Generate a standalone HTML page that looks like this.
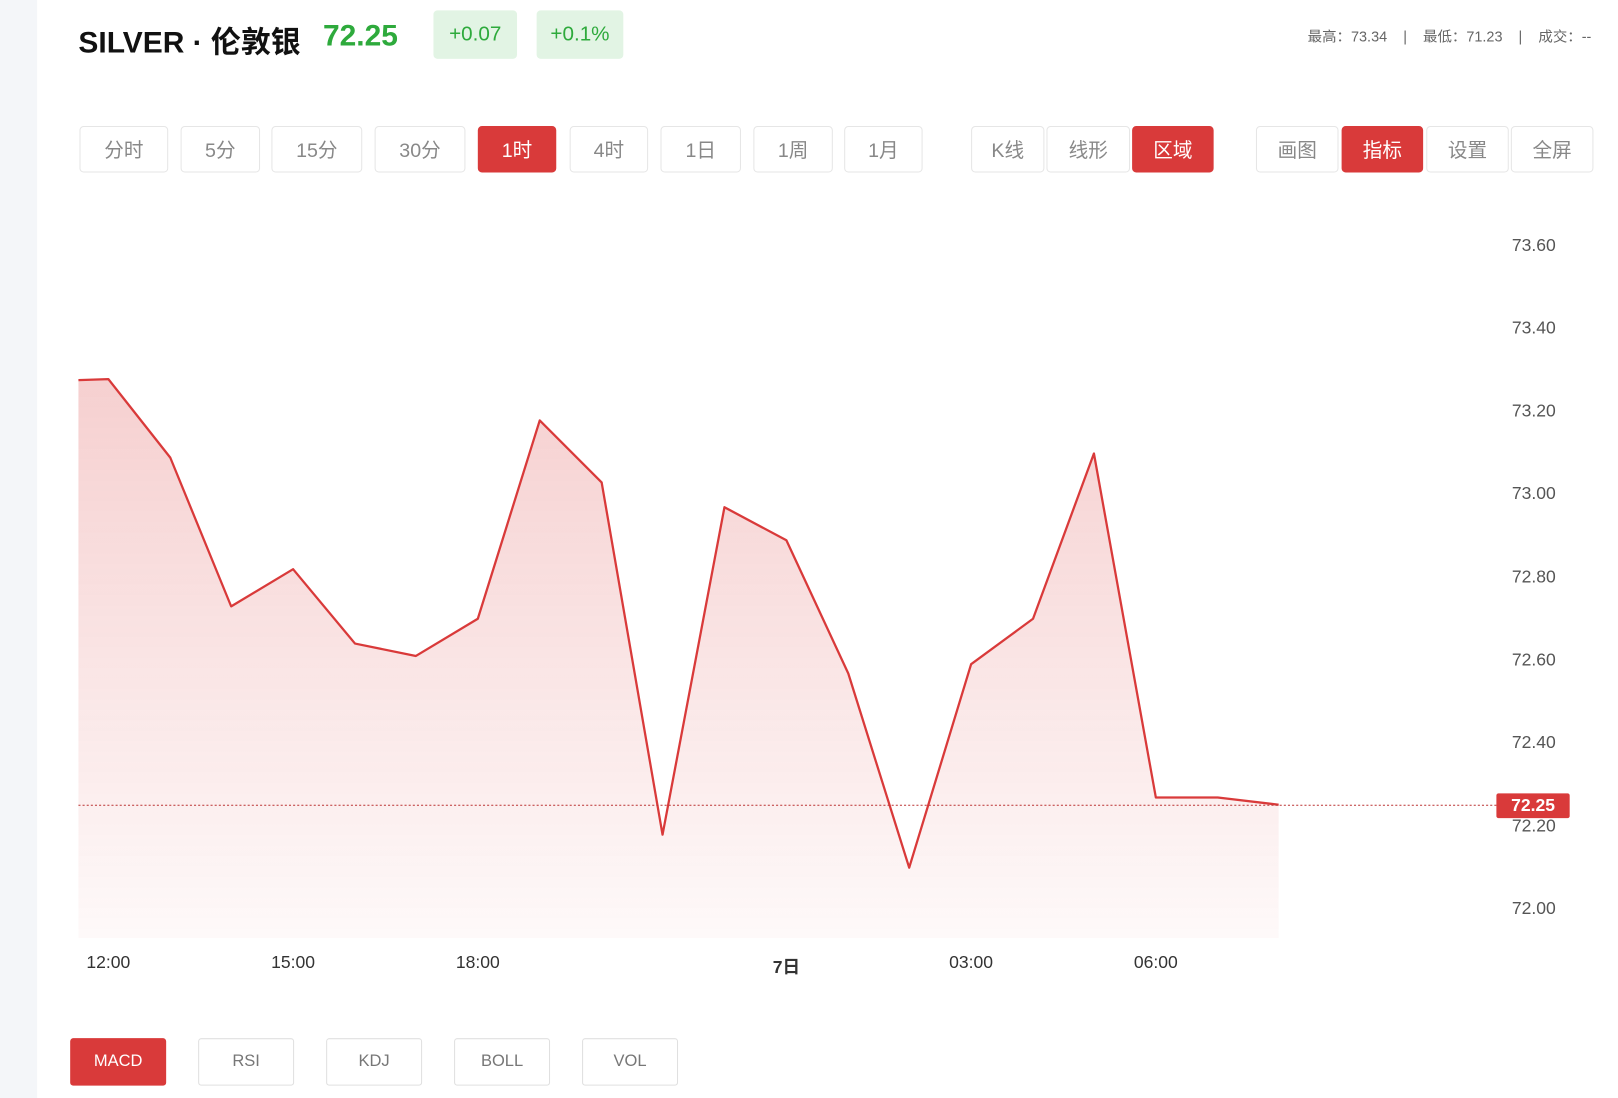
<!DOCTYPE html>
<html><head><meta charset="utf-8"><style>
html,body{margin:0;padding:0;background:#fff;overflow:hidden;width:1618px;height:1098px}
#w{position:absolute;left:0;top:0;width:1568px;height:1063px;transform:scale(1.032,1.033);transform-origin:0 0;font-family:"Liberation Sans","Noto Sans CJK SC",sans-serif}
.a{position:absolute}
.b{position:absolute;top:122px;height:43px;border:1px solid #e6e6e6;border-radius:4px;color:#888;font-size:19px;display:flex;align-items:center;justify-content:center;box-sizing:content-box}
.m{position:absolute;top:1005px;height:44px;border:1px solid #e0e0e0;border-radius:3px;color:#777;font-size:16px;display:flex;align-items:center;justify-content:center}
.r{background:#d93a3a;border-color:#d93a3a;color:#fff}
.y{position:absolute;left:1465px;font-size:17px;color:#555}
.x{position:absolute;top:922px;font-size:17px;color:#333;transform:translateX(-50%)}
</style></head><body><div id="w">
<div class="a" style="left:0;top:0;width:36px;height:1063px;background:#f4f6f9"></div>
<div class="a" style="left:76px;top:18px;font-size:29px;font-weight:bold;color:#111">SILVER · 伦敦银</div>
<div class="a" style="left:313px;top:19px;font-size:29px;font-weight:bold;color:#2eaa3c">72.25</div>
<div class="a" style="left:420px;top:10px;width:81px;height:47px;background:#e2f4e4;border-radius:4px;color:#2eaa3c;font-size:20px;display:flex;align-items:center;justify-content:center">+0.07</div>
<div class="a" style="left:520px;top:10px;width:84px;height:47px;background:#e2f4e4;border-radius:4px;color:#2eaa3c;font-size:20px;display:flex;align-items:center;justify-content:center">+0.1%</div>
<div class="a" style="right:26px;top:25px;font-size:14px;color:#666;white-space:pre">最高：73.34    |    最低：71.23    |    成交：--</div>
<div class="b" style="left:77px;width:84px">分时</div>
<div class="b" style="left:175px;width:75px">5分</div>
<div class="b" style="left:263px;width:86px">15分</div>
<div class="b" style="left:363px;width:86px">30分</div>
<div class="b r" style="left:463px;width:74px">1时</div>
<div class="b" style="left:552px;width:74px">4时</div>
<div class="b" style="left:640px;width:76px">1日</div>
<div class="b" style="left:730px;width:75px">1周</div>
<div class="b" style="left:818px;width:74px">1月</div>
<div class="b" style="left:941px;width:69px">K线</div>
<div class="b" style="left:1014px;width:79px">线形</div>
<div class="b r" style="left:1097px;width:77px">区域</div>
<div class="b" style="left:1217px;width:78px">画图</div>
<div class="b r" style="left:1300px;width:77px">指标</div>
<div class="b" style="left:1382px;width:78px">设置</div>
<div class="b" style="left:1464px;width:78px">全屏</div>
<svg class="a" style="left:0;top:0" width="1568" height="1063">
<defs><linearGradient id="g" x1="0" y1="0" x2="0" y2="1"><stop offset="0" stop-color="#d93a3a" stop-opacity="0.24"/><stop offset="1" stop-color="#d93a3a" stop-opacity="0.03"/></linearGradient></defs>
<polygon fill="url(#g)" points="76,368 105,367 165,443 224,587 284,551 344,623 403,635 463,599 523,407 583,467 642,808 702,491 762,523 822,652 881,840 941,643 1001,599 1060,439 1120,772 1180,772 1239,779 1239,908 76,908"/>
<polyline fill="none" stroke="#d93a3a" stroke-width="2.2" stroke-linejoin="round" points="76,368 105,367 165,443 224,587 284,551 344,623 403,635 463,599 523,407 583,467 642,808 702,491 762,523 822,652 881,840 941,643 1001,599 1060,439 1120,772 1180,772 1239,779"/>
<line x1="76" y1="779.5" x2="1450" y2="779.5" stroke="#b33" stroke-width="1" stroke-dasharray="2,2"/>
</svg>
<div class="y" style="top:228px">73.60</div>
<div class="y" style="top:308px">73.40</div>
<div class="y" style="top:388px">73.20</div>
<div class="y" style="top:468px">73.00</div>
<div class="y" style="top:549px">72.80</div>
<div class="y" style="top:629px">72.60</div>
<div class="y" style="top:709px">72.40</div>
<div class="y" style="top:790px">72.20</div>
<div class="y" style="top:870px">72.00</div>
<div class="a" style="left:1450px;top:768px;width:71px;height:24px;background:#d93a3a;border-radius:2px;color:#fff;font-size:17px;font-weight:bold;display:flex;align-items:center;justify-content:center">72.25</div>
<div class="x" style="left:105px">12:00</div>
<div class="x" style="left:284px">15:00</div>
<div class="x" style="left:463px">18:00</div>
<div class="x" style="left:762px;font-weight:bold">7日</div>
<div class="x" style="left:941px">03:00</div>
<div class="x" style="left:1120px">06:00</div>
<div class="m r" style="left:68px;width:91px">MACD</div>
<div class="m" style="left:192px;width:91px">RSI</div>
<div class="m" style="left:316px;width:91px">KDJ</div>
<div class="m" style="left:440px;width:91px">BOLL</div>
<div class="m" style="left:564px;width:91px">VOL</div>
</div></body></html>
